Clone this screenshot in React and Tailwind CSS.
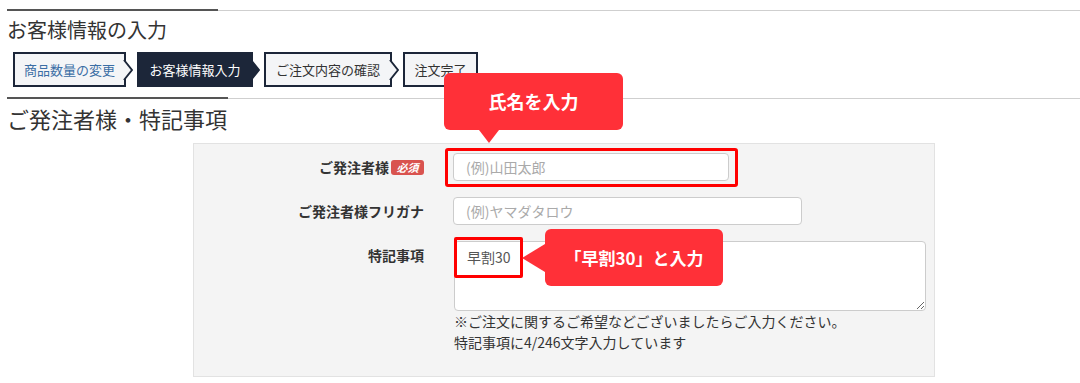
import React from "react";

const steps = [
  { label: "商品数量の変更", w: "w-[113px]", tone: "bg-[#f4f5f7] text-[#3b6ea5]", fill: "#f4f5f7" },
  { label: "お客様情報入力", w: "w-[116px]", tone: "bg-[#1c2639] text-white", fill: "#1c2639" },
  { label: "ご注文内容の確認", w: "w-[128px]", tone: "bg-[#f4f5f7] text-[#333]", fill: "#f4f5f7" },
  { label: "注文完了", w: "w-[75px]", tone: "bg-[#f4f5f7] text-[#333]", fill: null },
];

function Step({ step }) {
  return (
    <div className={`relative flex h-[35px] items-center justify-center border-2 border-[#1c2639] text-[13px] ${step.w} ${step.tone}`}>
      {step.label}
      {step.fill && (
        <svg className="absolute left-full top-1/2 -ml-[2px] -translate-y-1/2" width="11" height="22" viewBox="0 0 11 22">
          <polygon points="0,1 2,1 10,11 2,21 0,21" fill={step.fill} />
          <polyline points="2,1 10,11 2,21" fill="none" stroke="#1c2639" strokeWidth="2" />
        </svg>
      )}
    </div>
  );
}

function Rule({ dark }) {
  return (
    <div className="flex items-end">
      <div className={`h-[2px] bg-[#555] ${dark}`} />
      <div className="h-px flex-1 bg-[#cfcfcf]" />
    </div>
  );
}

export default function App() {
  return (
    <div className="h-[383px] w-[1080px] overflow-hidden bg-white pl-[7px] font-['Noto_Sans_CJK_JP','Noto_Sans',sans-serif] text-[#333]">
      <div className="pt-[9px]">
        <Rule dark="w-[211px]" />
      </div>
      <h1 className="mt-[5px] text-[20px] leading-[28px]">お客様情報の入力</h1>

      <div className="ml-[6px] mt-[8px] flex gap-[11px]">
        {steps.map((s) => (
          <Step key={s.label} step={s} />
        ))}
      </div>

      <div className="mt-[10px]">
        <Rule dark="w-[221px]" />
      </div>
      <h2 className="mt-[4px] text-[22px] leading-[30px]">ご発注者様・特記事項</h2>

      <div className="ml-[186px] mt-[10px] h-[234px] w-[742px] border border-[#e2e2e2] bg-[#f4f4f4] pt-[9px]">
        {/* 氏名 */}
        <div className="flex items-center">
          <div className="flex w-[230px] items-center justify-end text-[14px] font-bold">
            ご発注者様
            <span className="ml-[2px] flex h-[15px] w-[33px] items-center justify-center rounded-[3px] bg-[#d9534f] text-[11px] font-bold italic leading-none text-white">
              必須
            </span>
          </div>
          <div className="relative ml-[29px]">
            <input
              placeholder="(例)山田太郎"
              className="h-[28px] w-[276px] rounded-[4px] border border-[#ccc] bg-white px-[12px] text-[14px] outline-none placeholder:text-[#aaa]"
            />
            <div className="pointer-events-none absolute -bottom-[6px] -left-[8px] -right-[9px] -top-[5px] rounded-[3px] border-[3px] border-[#ff0000]" />
            <div className="absolute -left-[9px] -top-[80px] flex h-[57px] w-[179px] items-center justify-center rounded-[6px] bg-[#ff3038] text-[18px] font-bold text-white">
              氏名を入力
              <div className="absolute left-[35px] top-full border-x-[10px] border-t-[13px] border-x-transparent border-t-[#ff3038]" />
            </div>
          </div>
        </div>

        {/* フリガナ */}
        <div className="mt-[16px] flex items-center">
          <div className="w-[230px] text-right text-[14px] font-bold">ご発注者様フリガナ</div>
          <input
            placeholder="(例)ヤマダタロウ"
            className="ml-[29px] h-[28px] w-[349px] rounded-[4px] border border-[#ccc] bg-white px-[12px] text-[14px] outline-none placeholder:text-[#aaa]"
          />
        </div>

        {/* 特記事項 */}
        <div className="mt-[16px] flex items-start">
          <div className="w-[230px] pt-[4px] text-right text-[14px] font-bold leading-[20px]">特記事項</div>
          <div className="relative ml-[30px]">
            <textarea
              readOnly
              value="早割30"
              className="block h-[70px] w-[472px] rounded-[4px] border border-[#ccc] bg-white pl-[12px] pt-[5px] text-[14px] leading-[20px] text-[#555] outline-none"
            />
            <div className="pointer-events-none absolute -top-[4px] left-0 h-[41px] w-[69px] rounded-[2px] border-[3px] border-[#ff0000]" />
            <div className="absolute -top-[12px] left-[91px] flex h-[57px] w-[178px] items-center justify-center rounded-[6px] bg-[#ff3038] text-[17px] font-bold text-white">
              「早割30」と入力
              <div className="absolute right-full top-[15px] border-y-[14px] border-r-[23px] border-y-transparent border-r-[#ff3038]" />
            </div>
            <p className="text-[14px] leading-[21px]">※ご注文に関するご希望などございましたらご入力ください。</p>
            <p className="text-[14px] leading-[21px]">特記事項に4/246文字入力しています</p>
          </div>
        </div>
      </div>
    </div>
  );
}
